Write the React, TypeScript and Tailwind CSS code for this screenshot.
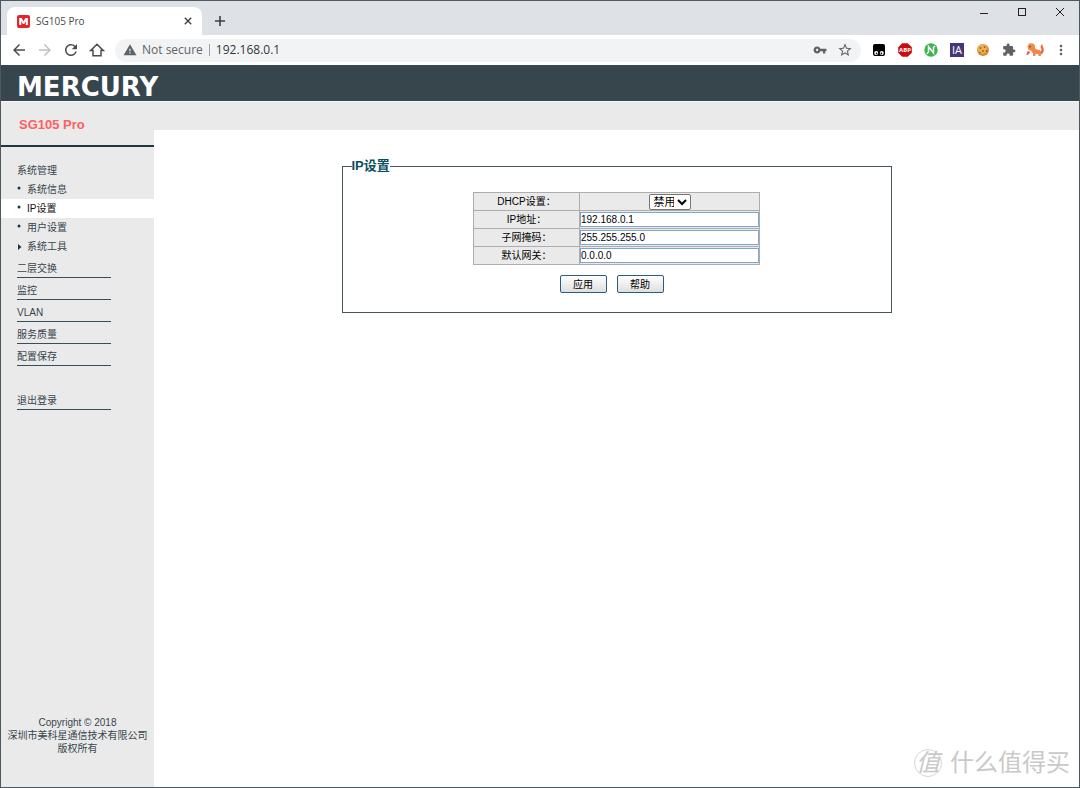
import type { ReactNode } from "react";
import {
  MdArrowBack,
  MdArrowForward,
  MdExtension,
  MdMoreVert,
  MdRefresh,
  MdStarBorder,
  MdVpnKey,
  MdWarning,
} from "react-icons/md";

const links = ["二层交换", "监控", "VLAN", "服务质量", "配置保存"];

const fields = [
  { id: "ip", label: "IP地址：", value: "192.168.0.1" },
  { id: "mask", label: "子网掩码：", value: "255.255.255.0" },
  { id: "gateway", label: "默认网关：", value: "0.0.0.0" },
];

function TitleBar() {
  return (
    <div className="flex items-end bg-[#dee1e6] pl-[6px] h-[34px]">
      <div className="flex items-center gap-[6px] bg-white px-[10px] rounded-t-lg w-[195px] h-7">
        <svg viewBox="0 0 13 13" className="size-[13px]">
          <rect width="13" height="13" rx="2" fill="#e3262c" />
          <path d="M2.2 10V3H4.6L6.5 6.2L8.4 3H10.8V10H8.8V6.2L7.2 8.9H5.8L4.2 6.2V10Z" fill="#fff" />
        </svg>
        <span className="flex-1 text-[#45494d] text-[10px]">SG105 Pro</span>
        <button type="button" aria-label="Close tab">
          <svg viewBox="0 0 10 10" className="size-2">
            <path d="M1 1L9 9M9 1L1 9" stroke="#3c4043" strokeWidth="1.7" />
          </svg>
        </button>
      </div>
      <button type="button" aria-label="New tab" className="mb-2 ml-3">
        <svg viewBox="0 0 12 12" className="size-3">
          <path d="M6 1V11M1 6H11" stroke="#3c4043" strokeWidth="1.6" />
        </svg>
      </button>
      <div className="flex self-start gap-7 mt-[6px] mr-[14px] ml-auto">
        <button type="button" aria-label="Minimize">
          <svg viewBox="0 0 10 10" className="size-[10px]">
            <path d="M1 6.5H9" stroke="#222" />
          </svg>
        </button>
        <button type="button" aria-label="Maximize">
          <svg viewBox="0 0 10 10" className="size-[10px]">
            <rect x="1.5" y="1.5" width="7" height="7" fill="none" stroke="#222" />
          </svg>
        </button>
        <button type="button" aria-label="Close">
          <svg viewBox="0 0 10 10" className="size-[10px]">
            <path d="M1 1L9 9M9 1L1 9" stroke="#222" />
          </svg>
        </button>
      </div>
    </div>
  );
}

function ToolButton({ label, children }: { label: string; children: ReactNode }) {
  return (
    <button type="button" aria-label={label} className="flex justify-center items-center size-4">
      {children}
    </button>
  );
}

function Toolbar() {
  return (
    <div className="flex items-center bg-white px-[10px] h-[30px] text-[#5f6368]">
      <div className="flex items-center gap-[10px]">
        <ToolButton label="Back">
          <MdArrowBack className="size-[18px] text-[#4a4e52] shrink-0" />
        </ToolButton>
        <ToolButton label="Forward">
          <MdArrowForward className="size-[18px] text-[#bdc1c6] shrink-0" />
        </ToolButton>
        <ToolButton label="Reload">
          <MdRefresh className="size-[18px] text-[#4a4e52] shrink-0" />
        </ToolButton>
        <ToolButton label="Home">
          <svg viewBox="0 0 16 16" className="size-4">
            <path d="M1.8 8.4L8 2.3L14.2 8.4H12V13.7H4V8.4Z" fill="none" stroke="#4a4e52" strokeWidth="1.5" />
          </svg>
        </ToolButton>
      </div>
      <div className="flex flex-1 items-center bg-[#f1f3f4] ml-[10px] px-2 rounded-full h-[23px]">
        <MdWarning className="size-[14px]" />
        <span className="ml-[5px] text-xs">Not secure</span>
        <span className="bg-[#9aa0a6] mr-[6px] ml-[6px] w-px h-3" />
        <input
          aria-label="Address"
          defaultValue="192.168.0.1"
          className="flex-1 bg-transparent outline-none min-w-0 text-[#33373b] text-xs"
        />
        <MdVpnKey className="mr-[10px] size-[14px]" />
        <MdStarBorder className="size-4" />
      </div>
      <div className="flex items-center gap-[10px] ml-[10px]">
        <ToolButton label="Tampermonkey">
          <svg viewBox="0 0 16 16" className="size-4">
            <path d="M4 2H12Q14 2 14 4V12Q14 14 12 14H4Q2 14 2 12V4Q2 2 4 2Z" fill="#000" />
            <circle cx="5.2" cy="11" r="2" fill="#fff" />
            <circle cx="10.8" cy="11" r="2" fill="#fff" />
            <circle cx="5.6" cy="11.4" r=".8" />
            <circle cx="10.4" cy="11.4" r=".8" />
          </svg>
        </ToolButton>
        <ToolButton label="Adblock Plus">
          <svg viewBox="0 0 16 16" className="size-4">
            <path d="M5.2 1.2H10.8L14.8 5.2V10.8L10.8 14.8H5.2L1.2 10.8V5.2Z" fill="#c70d12" />
            <text x="8" y="10.3" fill="#fff" fontSize="6" fontWeight="700" textAnchor="middle">ABP</text>
          </svg>
        </ToolButton>
        <ToolButton label="Notes">
          <svg viewBox="0 0 16 16" className="size-4">
            <circle cx="8" cy="8" r="6.7" fill="#39b54a" />
            <path d="M3.8 11.8L5.5 10V4.5L10.5 11V5.5L12 4" fill="none" stroke="#fff" strokeWidth="1.5" />
          </svg>
        </ToolButton>
        <ToolButton label="IA">
          <svg viewBox="0 0 16 16" className="size-4">
            <rect x="1" y="1" width="14" height="14" fill="#46357a" />
            <text x="8" y="12" fill="#fff" fontSize="11" textAnchor="middle">IA</text>
          </svg>
        </ToolButton>
        <ToolButton label="Cookies">
          <svg viewBox="0 0 16 16" className="size-4">
            <circle cx="8" cy="8" r="6" fill="#d98a33" />
            <circle cx="7.3" cy="7" r="4.8" fill="#efb150" />
            <g fill="#9a5c26">
              <circle cx="5.5" cy="6" r=".9" />
              <circle cx="9.5" cy="5" r=".9" />
              <circle cx="8" cy="9" r=".9" />
              <circle cx="5" cy="10.5" r=".8" />
              <circle cx="11.5" cy="9" r=".9" />
            </g>
          </svg>
        </ToolButton>
        <ToolButton label="Extensions">
          <MdExtension className="size-[14px]" />
        </ToolButton>
        <ToolButton label="Profile">
          <svg viewBox="0 0 18 16" className="w-[18px] h-4 shrink-0">
            <path d="M13 10Q16 10 15.5 7L14.5 5Q14.5 3 16.5 2Q16 4 17.5 6Q18.5 12 14 12.5" fill="#e9632d" />
            <circle cx="5.3" cy="5" r="3.7" fill="#f58a4b" />
            <path d="M5 7L8.5 5.5Q10 8 14 8Q15.5 10 14.8 14H12.8L12.2 12H9.8L9 14H7V11Q5 10 5 7Z" fill="#f0884b" />
            <path d="M1.6 9L4.2 10L2.4 12.6L.4 13Z" fill="#e8505b" />
            <circle cx="4" cy="4.8" r=".7" fill="#43251b" />
          </svg>
        </ToolButton>
        <ToolButton label="Menu">
          <MdMoreVert className="size-4 shrink-0" />
        </ToolButton>
      </div>
    </div>
  );
}

function SubItem({ text, active, arrow }: { text: string; active?: boolean; arrow?: boolean }) {
  return (
    <li className={active ? "bg-white" : ""}>
      <a href="#" className="flex items-center pl-4 h-[19px]">
        <svg viewBox="0 0 10 12" className="w-[10px] h-3">
          {arrow ? <path d="M1 3V9L4.5 6Z" fill="#183840" /> : <circle cx="2" cy="4" r="1.5" fill="#183840" />}
        </svg>
        <span className={active ? "text-[#111]" : ""}>{text}</span>
      </a>
    </li>
  );
}

function Sidebar() {
  return (
    <aside className="flex flex-col bg-[#eaeaea] w-[153px] text-[#36454c] text-[10px] shrink-0">
      <h1 className="pt-[14px] pl-[18px] border-[#20393e] border-b-2 h-[45px] font-bold text-[#ff5f5f] text-[13px] leading-[18px]">
        SG105 Pro
      </h1>
      <nav className="pt-[15px]">
        <a href="#" className="block pl-4 leading-[18px]">系统管理</a>
        <ul>
          <SubItem text="系统信息" />
          <SubItem text="IP设置" active />
          <SubItem text="用户设置" />
          <SubItem text="系统工具" arrow />
        </ul>
        <ul className="ml-4 w-[94px]">
          {links.map((text) => (
            <li key={text} className="pt-1 border-[#36505a] border-b">
              <a href="#" className="block leading-[17px]">{text}</a>
            </li>
          ))}
          <li className="mt-[22px] pt-1 border-[#36505a] border-b">
            <a href="#" className="block leading-[17px]">退出登录</a>
          </li>
        </ul>
      </nav>
      <footer className="mt-auto pb-8 text-center leading-[13px]">
        Copyright © 2018
        <br />
        深圳市美科星通信技术有限公司
        <br />
        版权所有
      </footer>
    </aside>
  );
}

function IpSettings() {
  return (
    <form className="mt-[26px] mx-auto w-[550px] max-w-full" onSubmit={(e) => e.preventDefault()}>
      <fieldset className="px-[9px] pb-[19px] border border-[#46555b]">
        <legend className="font-bold text-[#0b4f5e] text-[13px] leading-5">IP设置</legend>
        <table className="mx-auto mt-4 border border-[#adadad] w-[287px] text-[10px] text-black text-center border-collapse">
          <tbody>
            <tr className="bg-[#eaeaea] h-[18px]">
              <th className="p-0 border border-[#adadad] w-[106px] font-normal">
                <label htmlFor="dhcp">DHCP设置：</label>
              </th>
              <td className="p-0 border border-[#adadad]">
                <select
                  id="dhcp"
                  className="block bg-white mx-auto border border-[#767676] rounded-xs w-[42px] h-4 text-[11px] leading-[14px]"
                >
                  <option>禁用</option>
                  <option>启用</option>
                </select>
              </td>
            </tr>
            {fields.map((field) => (
              <tr key={field.id} className="bg-[#eaeaea] h-[18px]">
                <th className="p-0 border border-[#adadad] font-normal">
                  <label htmlFor={field.id}>{field.label}</label>
                </th>
                <td className="p-0 border border-[#adadad]">
                  <input
                    id={field.id}
                    defaultValue={field.value}
                    className="block bg-white border border-[#7da7d0] w-full h-[15px]"
                  />
                </td>
              </tr>
            ))}
          </tbody>
        </table>
        <div className="flex justify-center gap-[10px] mt-[10px] pr-[10px] text-[10px] text-black">
          {["应用", "帮助"].map((text) => (
            <button
              key={text}
              className="bg-linear-to-b from-white to-[#dedede] pt-px border border-[#2b5a85] rounded-xs w-[47px] h-[18px] leading-4"
            >
              {text}
            </button>
          ))}
        </div>
      </fieldset>
    </form>
  );
}

export default function App() {
  return (
    <div className="relative flex flex-col bg-white border border-[#4b5a60] min-h-screen font-['Liberation_Sans','Noto_Sans_CJK_SC',sans-serif]">
      <div className="font-['Open_Sans','Noto_Sans',sans-serif]">
        <TitleBar />
        <Toolbar />
      </div>
      <header className="flex items-center bg-[#37464d] pt-2 pl-4 border-[#f6f6f6] border-b h-[37px] font-['DejaVu_Sans',sans-serif] font-bold text-[26px] text-white leading-6">
        MERCURY
      </header>
      <div className="flex flex-1">
        <Sidebar />
        <main className="flex-1">
          <div className="bg-[#eaeaea] h-7" />
          <IpSettings />
        </main>
      </div>
      <div className="right-[9px] bottom-2 absolute flex items-center gap-2 text-[#c9c9c9]">
        <span className="flex justify-center items-center border border-[#d6d6d6] rounded-full size-7 text-2xl italic">值</span>
        <span className="text-2xl">什么值得买</span>
      </div>
    </div>
  );
}
